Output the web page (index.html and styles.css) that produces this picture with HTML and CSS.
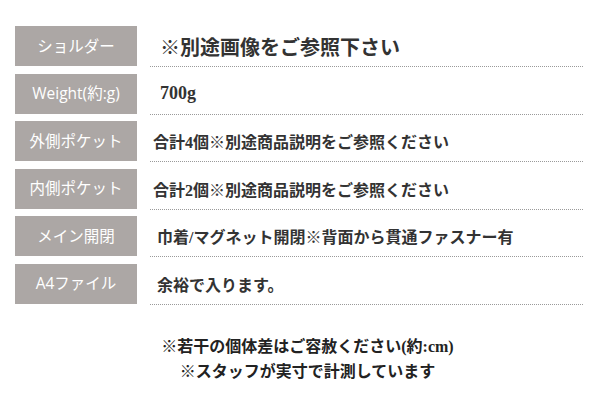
FILE: index.html
```html
<!DOCTYPE html>
<html lang="ja">
<head>
<meta charset="utf-8">
<link rel="stylesheet" href="styles.css">
</head>
<body>
<div class="spec">
  <div class="label">ショルダー</div>
  <div class="value big pad-a">※別途画像をご参照下さい</div>
  <div class="label">Weight(約:g)</div>
  <div class="value mid pad-a">700g</div>
  <div class="label">外側ポケット</div>
  <div class="value pad-b">合計4個※別途商品説明をご参照ください</div>
  <div class="label">内側ポケット</div>
  <div class="value pad-b">合計2個※別途商品説明をご参照ください</div>
  <div class="label">メイン開閉</div>
  <div class="value pad-c">巾着/マグネット開閉※背面から貫通ファスナー有</div>
  <div class="label">A4ファイル</div>
  <div class="value pad-c">余裕で入ります。</div>
</div>
<div class="note">
  <p>※若干の個体差はご容赦ください(約:cm)</p>
  <p>※スタッフが実寸で計測しています</p>
</div>
</body>
</html>
```
FILE: styles.css
```css
html, body {
  margin: 0;
  padding: 0;
  background: #fff;
}
body {
  width: 600px;
  height: 400px;
  overflow: hidden;
}
.spec {
  display: grid;
  grid-template-columns: 122px 433px;
  column-gap: 13px;
  row-gap: 6.5px;
  padding: 26px 0 0 15px;
}
.label {
  height: 40px;
  padding-bottom: 2px;
  box-sizing: border-box;
  background: #aca7a5;
  color: #fff;
  font-family: "Open Sans", "Noto Sans CJK JP", sans-serif;
  font-size: 15.5px;
  font-weight: 400;
  display: flex;
  align-items: center;
  justify-content: center;
}
.value {
  height: 40px;
  border-bottom: 1px dotted #9a9a9a;
  display: flex;
  align-items: center;
  color: #333;
  font-family: "Liberation Serif", "Noto Sans CJK JP", serif;
  font-weight: 700;
  font-size: 16px;
}
.value.big { font-size: 20px; }
.value.mid { font-size: 18px; }
.pad-a { padding-left: 10px; }
.pad-b { padding-left: 3px; }
.pad-c { padding-left: 7px; }
.note {
  width: 585px;
  margin: 29px 0 0 15px;
  text-align: center;
  color: #222;
  font-family: "Liberation Serif", "Noto Sans CJK JP", serif;
  font-weight: 700;
  font-size: 16px;
  line-height: 25px;
}
.note p { margin: 0; }
```
